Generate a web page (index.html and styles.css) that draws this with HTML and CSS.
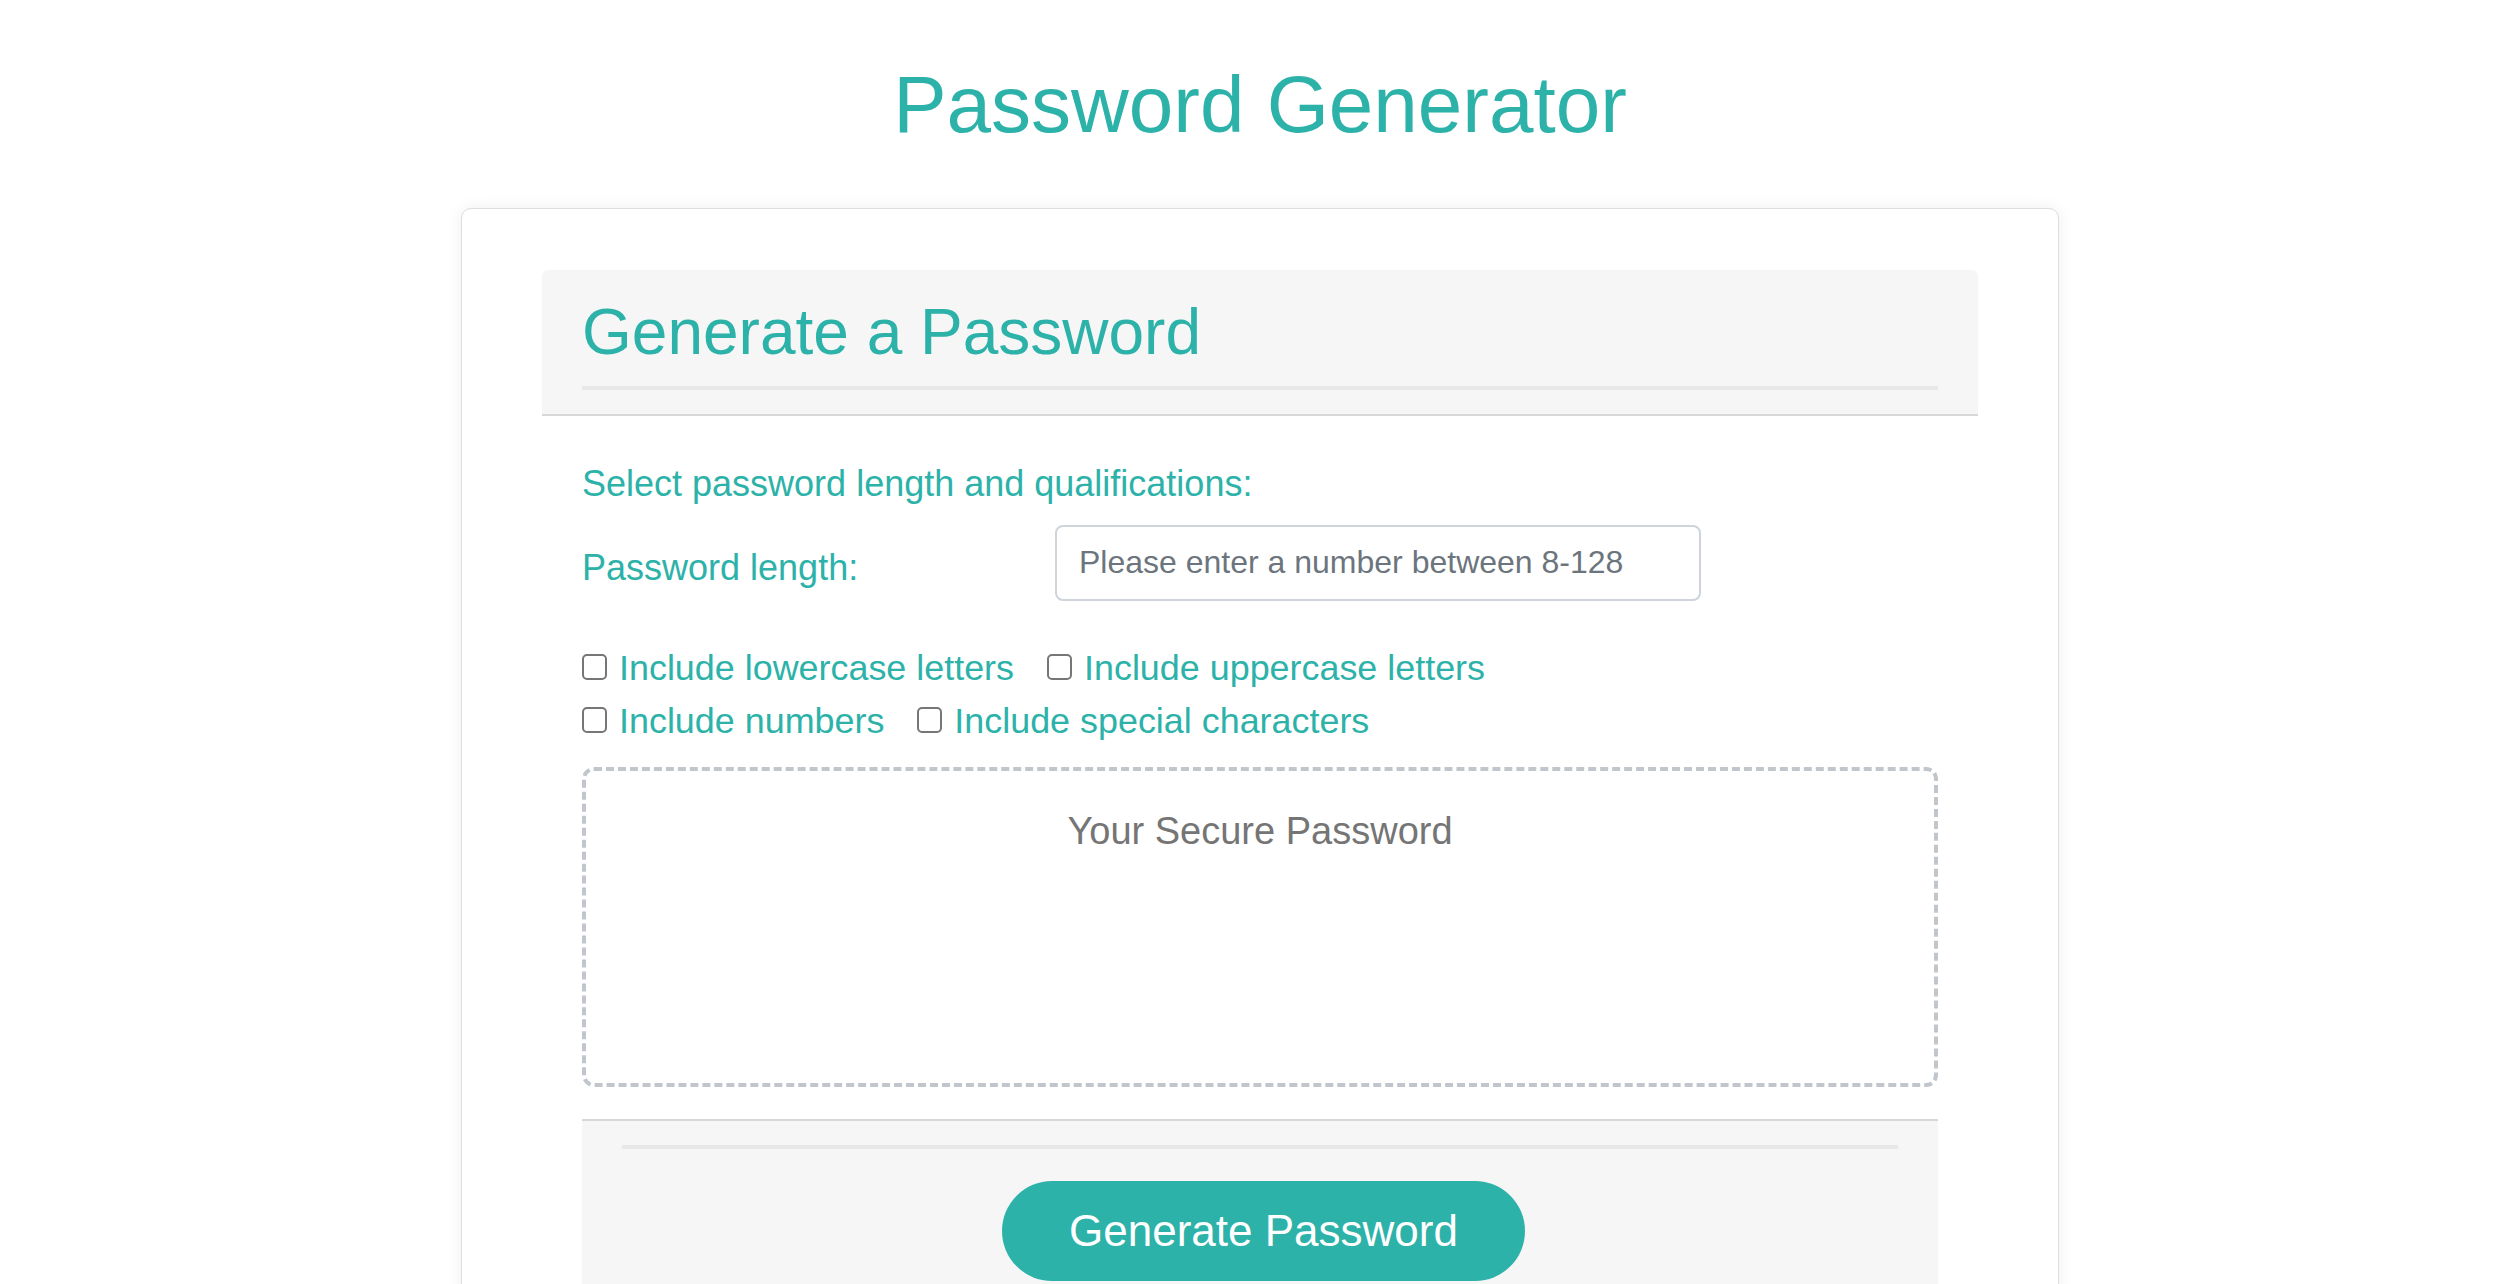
FILE: index.html
```html
<!DOCTYPE html>
<html lang="en">
<head>
<meta charset="utf-8">
<title>Password Generator</title>
<link rel="stylesheet" href="styles.css">
</head>
<body>
  <h1 class="page-title">Password Generator</h1>
  <div class="card">
    <div class="card-header">
      <h2 class="card-title">Generate a Password</h2>
      <hr class="rule">
    </div>
    <div class="card-body">
      <p class="lead">Select password length and qualifications:</p>
      <div class="length-row">
        <label class="length-label" for="length">Password length:</label>
        <input class="length-input" id="length" type="text" placeholder="Please enter a number between 8-128">
      </div>
      <div class="options">
        <div class="option-row">
          <label class="option"><input type="checkbox" class="check"><span>Include lowercase letters</span></label>
          <label class="option"><input type="checkbox" class="check"><span>Include uppercase letters</span></label>
        </div>
        <div class="option-row">
          <label class="option"><input type="checkbox" class="check"><span>Include numbers</span></label>
          <label class="option"><input type="checkbox" class="check"><span>Include special characters</span></label>
        </div>
      </div>
      <div class="output">Your Secure Password</div>
      <div class="card-footer">
        <hr class="rule">
        <div class="actions">
          <button class="generate" type="button">Generate Password</button>
        </div>
      </div>
    </div>
  </div>
</body>
</html>
```
FILE: styles.css
```css
* { box-sizing: border-box; }

html, body { background: #ffffff; }

body {
  margin: 0;
  padding-left: 24px;
  font-family: "Liberation Sans", Arial, Helvetica, sans-serif;
  color: #2cb2a9;
}

.page-title {
  margin: 57px 0 55px;
  text-align: center;
  font-size: 80px;
  line-height: 96px;
  font-weight: 400;
  color: #2cb2a9;
}

.card {
  width: 1598px;
  margin: 0 auto;
  border: 1px solid #dddddd;
  border-radius: 10px;
  padding: 61px 80px 0;
  box-shadow: 0 0 16px rgba(0, 0, 0, 0.07);
  background: #ffffff;
}

.card-header {
  background: #f6f6f6;
  border-radius: 6px 6px 0 0;
  padding: 24px 40px 24px;
  border-bottom: 2px solid #d8d8d8;
}

.card-title {
  margin: 0 0 15px;
  font-size: 64px;
  line-height: 1.2;
  font-weight: 400;
  color: #2cb2a9;
}

.rule {
  display: block;
  height: 4px;
  margin: 0;
  border: 0;
  background: #e8e8e8;
}

.card-body {
  padding: 41px 40px 0;
}

.lead {
  margin: 0;
  font-size: 36px;
  line-height: 54px;
}

.length-row {
  display: grid;
  grid-template-columns: 473px 646px;
  align-items: start;
  margin-top: 14px;
}

.length-label {
  padding-top: 16px;
  font-size: 36px;
  line-height: 54px;
}

.length-input {
  width: 646px;
  height: 76px;
  border: 2px solid #ced4da;
  border-radius: 8px;
  padding: 12px 22px;
  font-family: "Liberation Sans", Arial, Helvetica, sans-serif;
  font-size: 32px;
  line-height: 48px;
  color: #495057;
  background: #ffffff;
  outline: none;
}

.length-input::placeholder { color: #6c757d; opacity: 1; }

.options {
  margin-top: 40px;
}

.option-row {
  display: flex;
  align-items: center;
  height: 53px;
}

.option {
  display: inline-flex;
  align-items: center;
  gap: 12px;
  margin-right: 33px;
  font-size: 35.9px;
  line-height: 53px;
}

.option span { padding-top: 2px; }

.check {
  appearance: none;
  -webkit-appearance: none;
  width: 25px;
  height: 26px;
  margin: 0;
  border: 2px solid #767676;
  border-radius: 5px;
  background: #ffffff;
}

.output {
  margin-top: 20px;
  height: 320px;
  border: 4px dashed #c1c6cd;
  border-radius: 12px;
  padding-top: 32px;
  text-align: center;
  font-size: 38px;
  line-height: 57px;
  color: #757575;
}

.card-footer {
  margin-top: 32px;
  border-top: 2px solid #d8d8d8;
  background: #f6f6f6;
  padding: 24px 40px 40px;
}

.actions {
  display: flex;
  justify-content: center;
  margin-top: 32px;
  padding-left: 7px;
}

.generate {
  width: 523px;
  height: 100px;
  border: 0;
  border-radius: 50px;
  background: #2cb2a9;
  color: #ffffff;
  font-family: "Liberation Sans", Arial, Helvetica, sans-serif;
  font-size: 44px;
  cursor: pointer;
}
```
